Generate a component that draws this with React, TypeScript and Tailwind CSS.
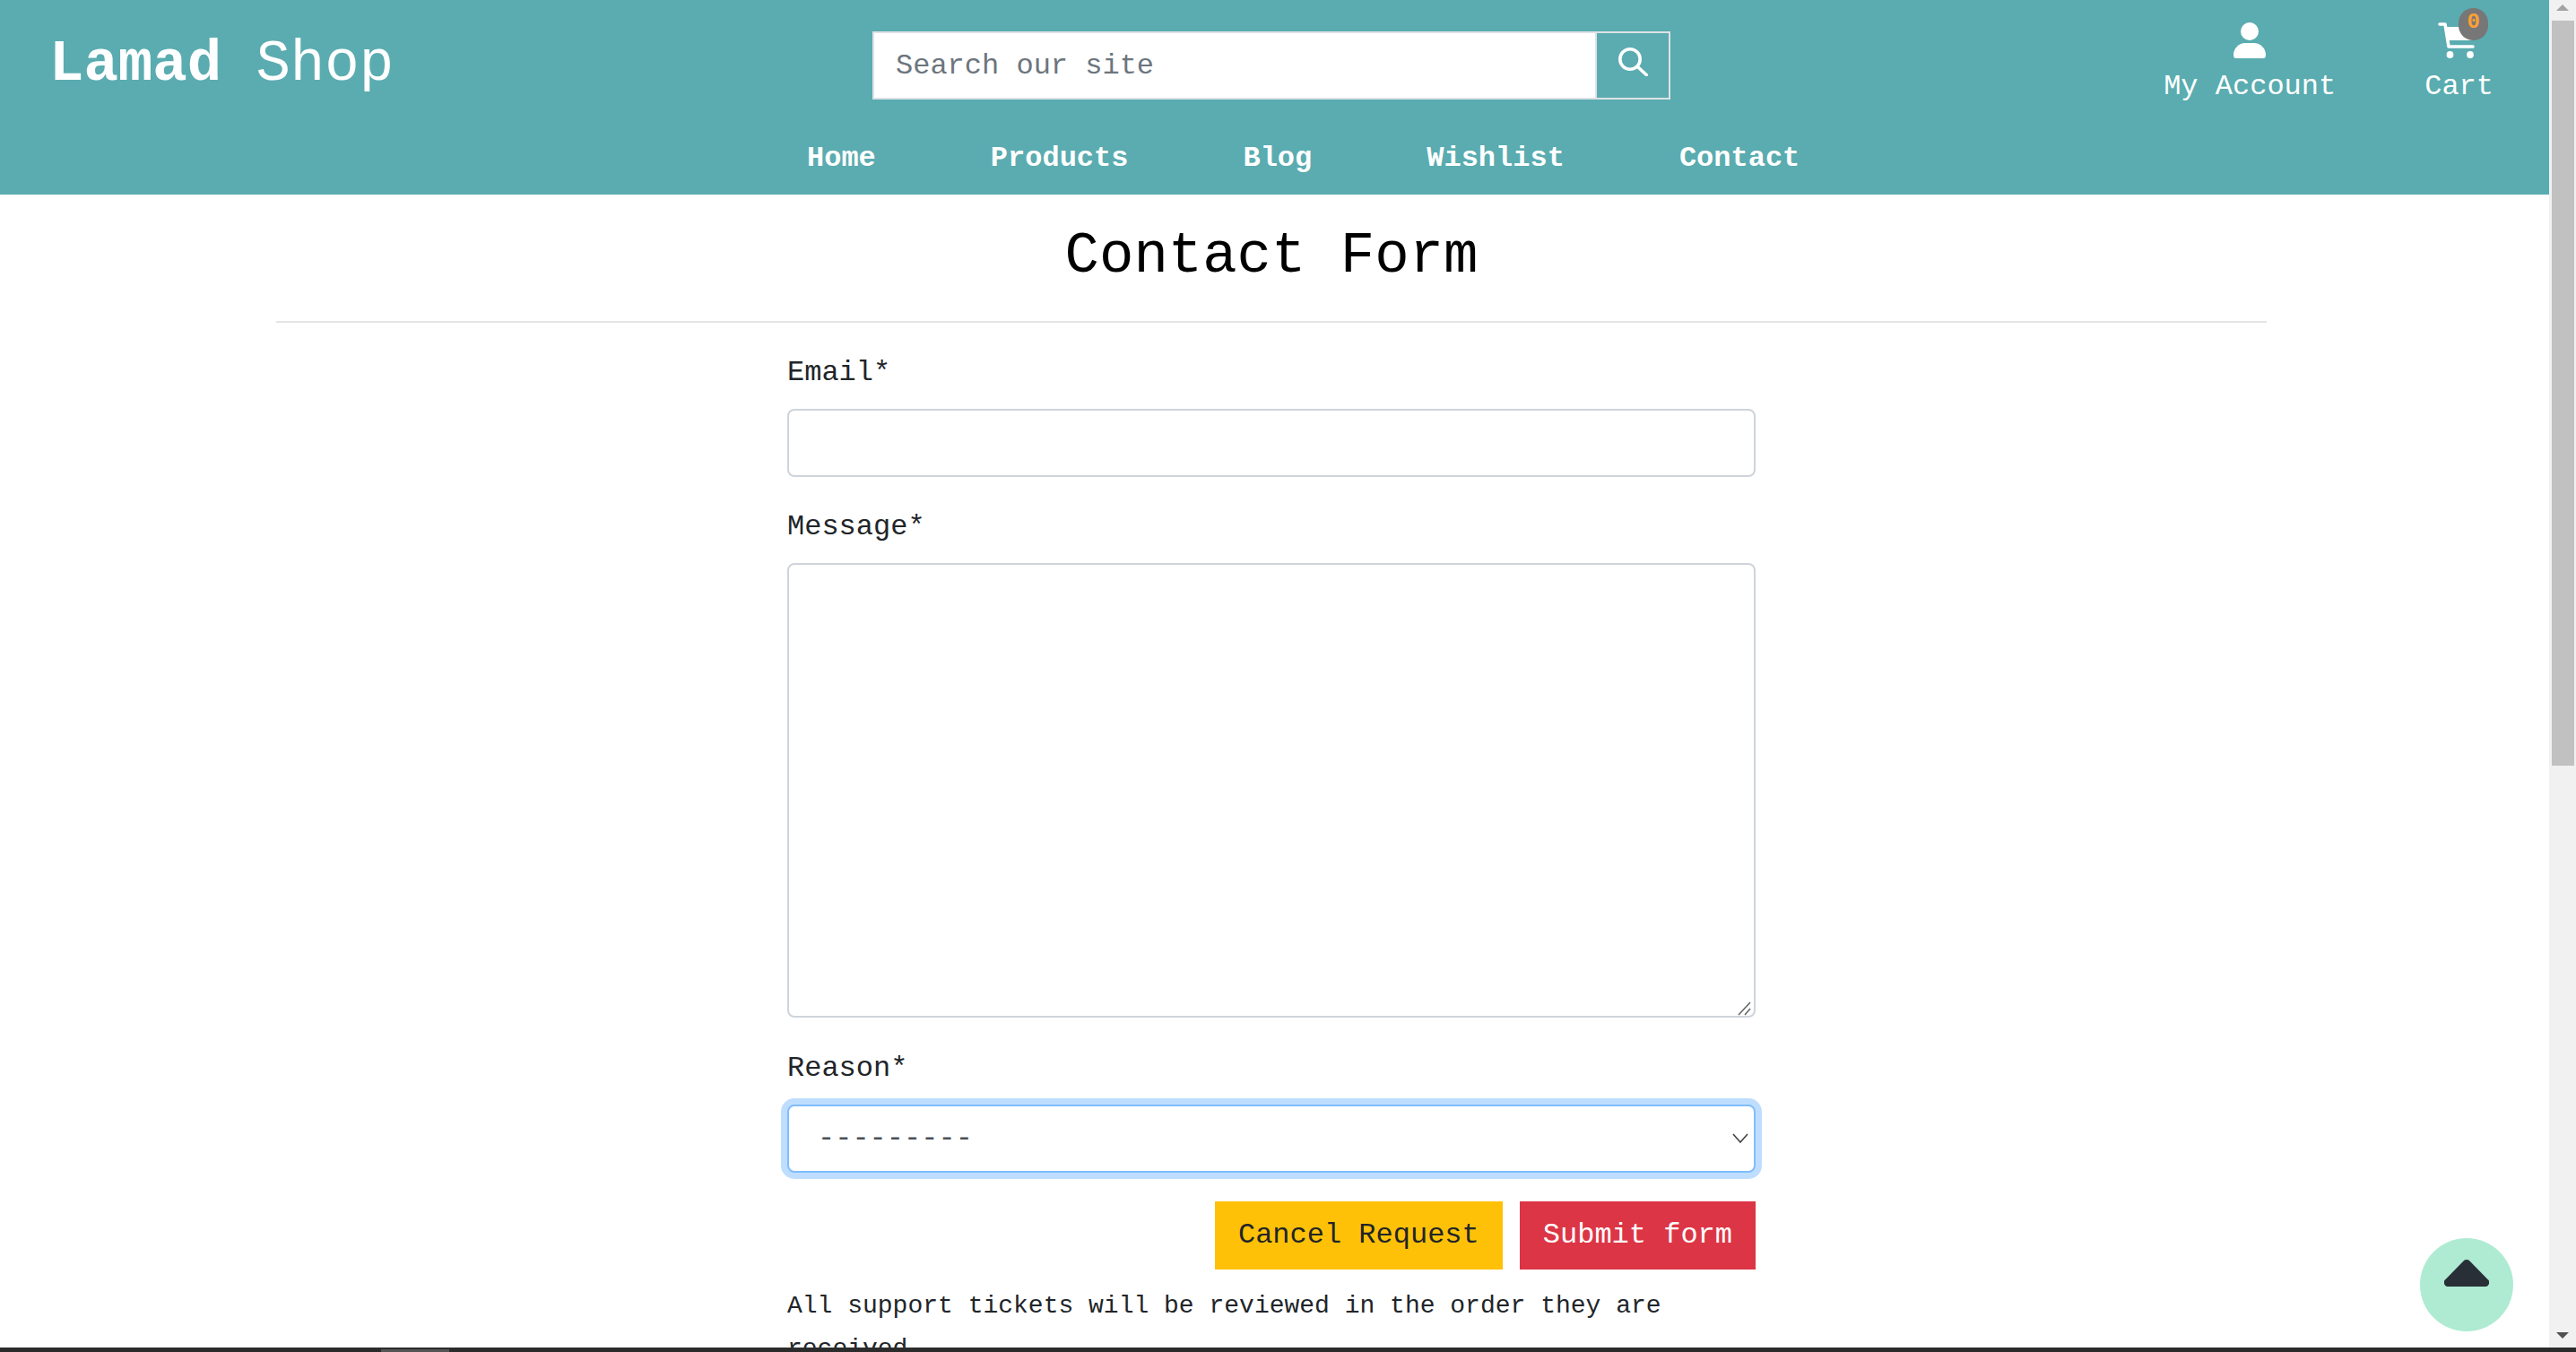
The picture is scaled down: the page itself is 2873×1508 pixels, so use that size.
import React from 'react'

const navLinks = ['Home', 'Products', 'Blog', 'Wishlist', 'Contact']

function SearchIcon() {
  return (
    <svg width="33" height="32" viewBox="0 0 33 32" fill="none" stroke="white" strokeWidth="3.6" strokeLinecap="round">
      <circle cx="13" cy="13" r="11.2" />
      <path d="M21.5 21.5 L31.2 30.5" />
    </svg>
  )
}

function UserIcon() {
  return (
    <svg width="36" height="40" viewBox="0 0 36 40" fill="white">
      <circle cx="18" cy="10" r="10" />
      <path d="M0 36 C0 29 6 23 13 23 H23 C30 23 36 29 36 36 C36 39 35 40 33 40 H3 C1 40 0 39 0 36 Z" />
    </svg>
  )
}

function CartIcon() {
  return (
    <svg width="41" height="40" viewBox="0 0 41 40" className="mr-[6px]">
      <path d="M2 2 H8 L12 27 H39" fill="none" stroke="white" strokeWidth="3.6" strokeLinecap="round" strokeLinejoin="round" />
      <path d="M8 5 H40 L38 20 H10 Z" fill="white" />
      <circle cx="13.5" cy="36" r="3.9" fill="white" />
      <circle cx="36" cy="36" r="3.9" fill="white" />
    </svg>
  )
}

function Label({ children }: { children: React.ReactNode }) {
  return <label className="block h-12 mb-4 text-[32px] leading-[48px] text-[#212529]">{children}</label>
}

export default function App() {
  return (
    <div className="relative flex flex-col h-[1508px] w-full overflow-hidden bg-white font-['Liberation_Mono',monospace]">
      <div className="flex flex-1 min-h-0">
        <div className="flex-1 min-w-0 overflow-hidden">
          <header className="h-[217px] bg-[#5aacb0] text-white text-[32px] leading-[48px]">
            <div className="flex h-[153px]">
              <div className="w-[973px] pl-[55px] pt-[33px] text-[64px] leading-[78px] whitespace-pre">
                <span className="font-bold">Lamad</span> Shop
              </div>
              <div className="flex h-[76px] w-[890px] mt-[35px] border-2 border-[#dee2e6]">
                <input
                  placeholder="Search our site"
                  className="flex-1 min-w-0 bg-white px-6 pt-[1px] text-[32px] text-[#495057] placeholder:text-[#6c757d] outline-none"
                />
                <button className="flex items-center justify-center w-[82px] pb-[8px] border-l-2 border-[#dee2e6]">
                  <SearchIcon />
                </button>
              </div>
              <div className="flex flex-1 justify-end gap-[99px] pr-[62px] pt-[25px]">
                <div className="flex flex-col items-center">
                  <UserIcon />
                  <span className="mt-[8px]">My Account</span>
                </div>
                <div className="relative flex flex-col items-center">
                  <CartIcon />
                  <span className="mt-[8px]">Cart</span>
                  <span className="absolute left-[38px] top-[-16px] flex items-center justify-center w-[33px] h-[36px] rounded-full bg-[#777777] text-[#ffa033] text-[24px] font-bold leading-none pb-[4px]">
                    0
                  </span>
                </div>
              </div>
            </div>
            <nav className="flex pl-[836px] font-bold">
              {navLinks.map((link) => (
                <a key={link} className="px-16">
                  {link}
                </a>
              ))}
            </nav>
          </header>
          <main className="ml-[308px] w-[2220px]">
            <h1 className="pt-[23px] pb-[26px] text-center text-[64px] leading-[92px] text-black border-b-2 border-[#e5e5e5]">
              Contact Form
            </h1>
            <form className="ml-[570px] w-[1080px] pt-[32px]">
              <Label>Email*</Label>
              <input className="block w-full h-[76px] rounded-lg border-2 border-[#ced4da] mb-[32px] text-[32px]" />
              <Label>Message*</Label>
              <div className="relative mb-[33px]">
                <textarea className="block w-full h-[507px] rounded-lg border-2 border-[#ced4da] text-[32px] resize-none" />
                <svg width="18" height="18" viewBox="0 0 18 18" className="absolute right-[3px] bottom-[2px]" stroke="#666666" strokeWidth="1.6" fill="none">
                  <path d="M2 17 L15 3 M9 17 L15 10" />
                </svg>
              </div>
              <Label>Reason*</Label>
              <div className="relative">
                <select
                  defaultValue=""
                  className="block w-full h-[76px] appearance-none rounded-lg border-2 border-[#80bdff] bg-white pl-[32px] text-[32px] text-[#495057] shadow-[0_0_0_7px_#bfdeff] outline-none"
                >
                  <option value="">---------</option>
                </select>
                <svg width="18" height="11" viewBox="0 0 18 11" className="absolute right-[8px] top-[32px]" stroke="#444444" strokeWidth="1.6" fill="none">
                  <path d="M1 1 L9 10 L17 1" />
                </svg>
              </div>
              <div className="flex justify-end gap-[19px] mt-[32px]">
                <button type="button" className="h-[76px] px-[26px] bg-[#ffc107] text-[32px] text-[#212529]">
                  Cancel Request
                </button>
                <button type="button" className="h-[76px] px-[26px] bg-[#dc3545] text-[32px] text-white">
                  Submit form
                </button>
              </div>
              <p className="mt-[17px] text-[28px] leading-[48px] text-[#212529]">
                All support tickets will be reviewed in the order they are received.
              </p>
            </form>
          </main>
        </div>
        {/* page scrollbar */}
        <div className="flex flex-col items-center w-[30px] bg-[#f1f1f1]">
          <div className="h-[23px] pt-[5px]">
            <div className="w-0 h-0 border-x-[7px] border-x-transparent border-b-[7px] border-b-[#a3a3a3]" />
          </div>
          <div className="w-[25px] h-[831px] bg-[#c1c1c1]" />
          <div className="mt-auto mb-[10px] w-0 h-0 border-x-[7px] border-x-transparent border-t-[7px] border-t-[#505050]" />
        </div>
      </div>
      {/* horizontal scrollbar sliver */}
      <div className="h-[5px] bg-[#2b2b2b] pt-[2px] pl-[425px]">
        <div className="h-[3px] w-[76px] bg-[#555555]" />
      </div>
      <button className="absolute left-[2699px] top-[1381px] flex items-center justify-center w-[104px] h-[104px] rounded-full bg-[#aeebd2] pb-[26px]">
        <svg width="50" height="30" viewBox="0 0 50 30" fill="#292f36">
          <path d="M21.5 1.5 a5 5 0 0 1 7 0 L48.5 22 a4.5 4.5 0 0 1 -3.5 8 H5 a4.5 4.5 0 0 1 -3.5 -8 Z" />
        </svg>
      </button>
    </div>
  )
}
